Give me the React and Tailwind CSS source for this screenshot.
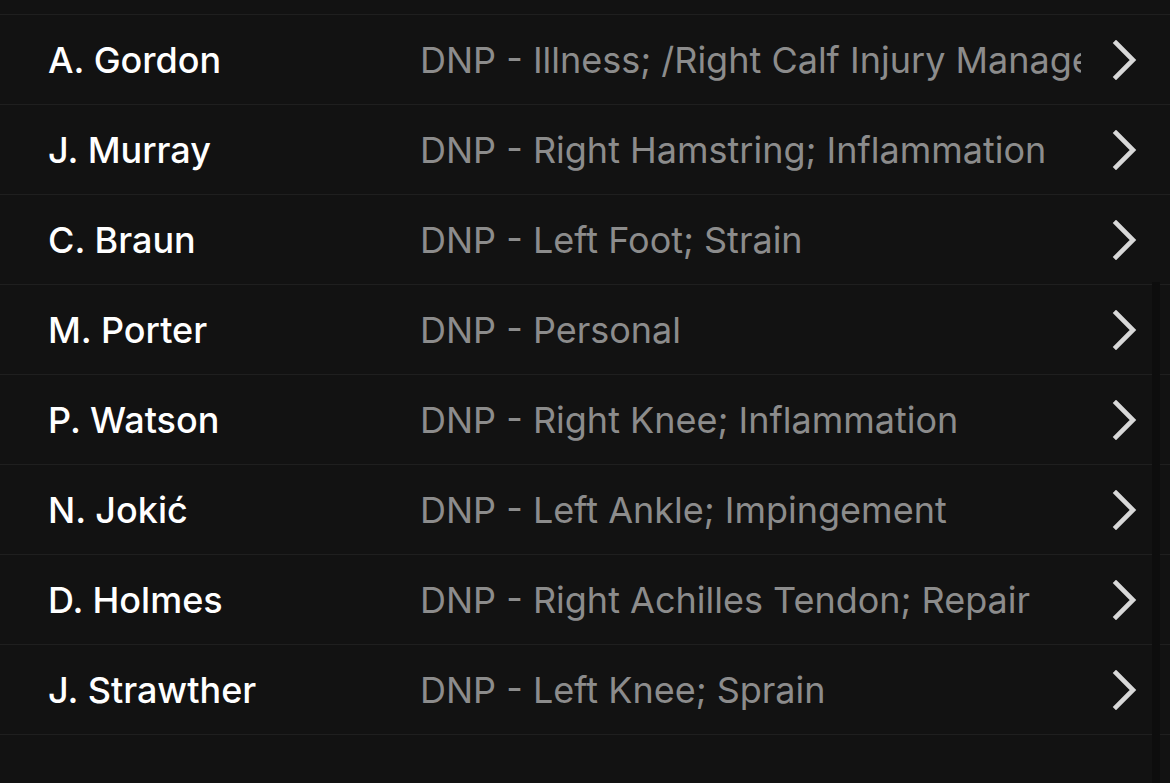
const players = [
  { name: "A. Gordon", status: "DNP - Illness; /Right Calf Injury Management" },
  { name: "J. Murray", status: "DNP - Right Hamstring; Inflammation" },
  { name: "C. Braun", status: "DNP - Left Foot; Strain" },
  { name: "M. Porter", status: "DNP - Personal" },
  { name: "P. Watson", status: "DNP - Right Knee; Inflammation" },
  { name: "N. Jokić", status: "DNP - Left Ankle; Impingement" },
  { name: "D. Holmes", status: "DNP - Right Achilles Tendon; Repair" },
  { name: "J. Strawther", status: "DNP - Left Knee; Sprain" },
];

function Chevron() {
  return (
    <svg width="26" height="40" viewBox="0 0 26 40" className="shrink-0">
      <path d="M4 3 L21 20 L4 37" fill="none" stroke="#d8d8d8" strokeWidth="4.6" strokeLinecap="square" strokeLinejoin="miter" />
    </svg>
  );
}

export default function App() {
  return (
    <div className="relative h-[783px] w-[1170px] overflow-hidden bg-[#121212]" style={{ fontFamily: "Inter, 'Noto Sans', sans-serif" }}>
      <div className="h-[15px] border-b border-[#1f1f1f]" />
      {players.map((p) => (
        <div key={p.name} className="flex h-[90px] items-center border-b border-[#1f1f1f]">
          <div className="w-[420px] shrink-0 pl-[48px] text-[36px] font-medium text-white">{p.name}</div>
          <div className="min-w-0 w-[661px] shrink-0 overflow-hidden whitespace-nowrap text-[36px] text-[#8c8c8c]">{p.status}</div>
          <div className="ml-[31px]">
            <Chevron />
          </div>
        </div>
      ))}
      <div className="absolute right-[10px] top-[282px] bottom-0 w-[8px] bg-[#0d0d0d]" />
    </div>
  );
}
